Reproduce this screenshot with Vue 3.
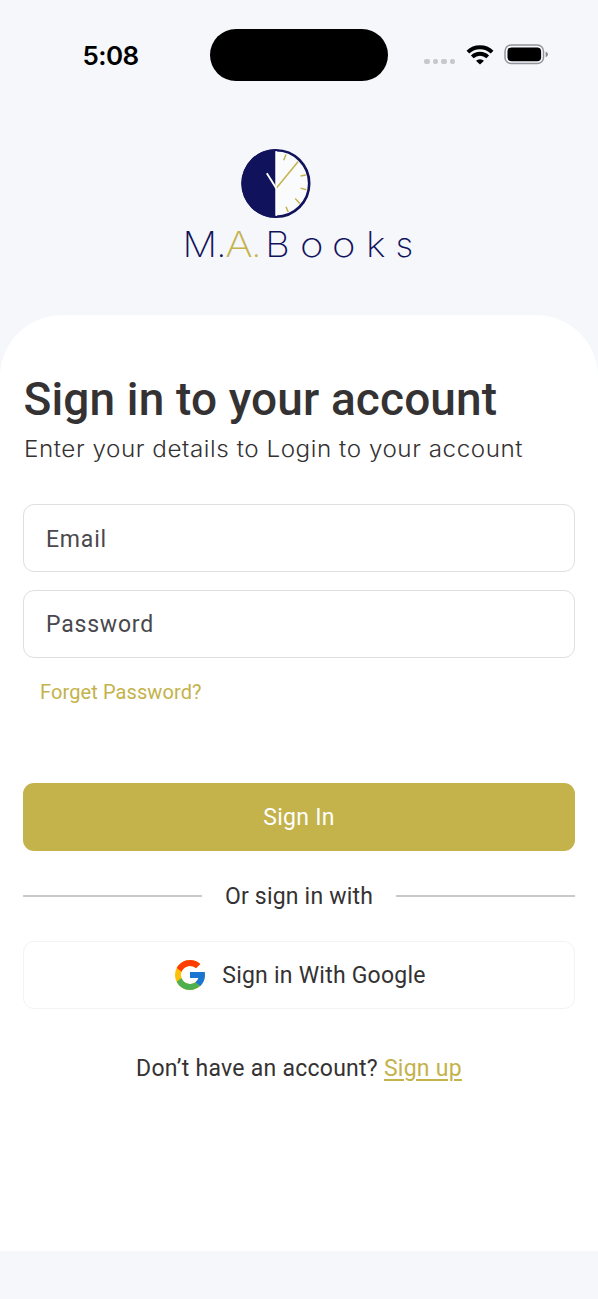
<script setup>
import { reactive } from 'vue'

const form = reactive({ email: '', password: '' })
</script>

<template>
  <main class="screen">
    <header class="status">
      <span class="time">5:08</span>
      <span class="island"></span>
      <div class="indicators">
        <span class="dots"><i v-for="n in 4" :key="n"></i></span>
        <svg class="wifi" width="28" height="20" viewBox="0 0 28 20">
          <g fill="none" stroke="#000" stroke-width="3.9">
            <path d="M1.9 7.1A17.4 17.4 0 0 1 26.1 7.1" />
            <path d="M6.3 11.9A11 11 0 0 1 21.7 11.9" />
          </g>
          <path d="M14 19.6L10 15.8A5.9 5.9 0 0 1 18 15.8Z" />
        </svg>
        <svg class="battery" width="45" height="21" viewBox="0 0 45 21">
          <rect x="1" y="1" width="38.5" height="18.6" rx="6.2" fill="none" stroke="#94959a" stroke-width="1.5" />
          <rect x="3.5" y="3.4" width="33.6" height="13.8" rx="4" />
          <path d="M41.7 7.4Q44 8.2 44 10.3T41.7 13.2Z" fill="#85868a" />
        </svg>
      </div>
    </header>

    <section class="brand">
      <svg width="240" height="120" viewBox="0 0 240 120" role="img" aria-label="M.A.Books">
        <circle cx="97" cy="34.5" r="33.2" fill="#fafbfd" stroke="#11125c" stroke-width="2.6" />
        <path d="M96.5 .2A34.3 34.3 0 0 0 96.5 68.8Z" fill="#11125c" />
        <path d="M97.2 2V67" stroke="#fff" stroke-width="1.3" />
        <path d="M97.5 39L119.2 12.5M107 5.5L104.7 11.3M121.5 26.9L126.8 26M121.5 39.1L127.4 40.8M116.2 49.5L120.8 54.5M107 57.7L109.2 63" fill="none" stroke="#c4b24b" stroke-width="1.5" />
        <path d="M87.8 24.3L97.4 39.5" stroke="#fff" stroke-width="1.9" />
        <g class="wordmark">
          <text x="3.5" y="107.8" textLength="34.6" lengthAdjust="spacingAndGlyphs">M</text>
          <text x="37.4" y="107.8">.</text>
          <text class="gold" x="46.2" y="107.8" textLength="27.4" lengthAdjust="spacingAndGlyphs">A</text>
          <text class="gold" x="72.4" y="107.8">.</text>
          <text x="86.2" y="107.8" textLength="24.500" lengthAdjust="spacingAndGlyphs">B</text>
          <text x="121" y="107.8" textLength="23.500" lengthAdjust="spacingAndGlyphs">o</text>
          <text x="153" y="107.8" textLength="23.500" lengthAdjust="spacingAndGlyphs">o</text>
          <text x="187" y="107.8" textLength="19.500" lengthAdjust="spacingAndGlyphs">k</text>
          <text x="216.500" y="107.8">s</text>
        </g>
      </svg>
    </section>

    <section class="sheet">
      <h1>Sign in to your account</h1>
      <p class="intro">Enter your details to Login to your account</p>
      <form @submit.prevent>
        <input v-model="form.email" type="email" placeholder="Email" aria-label="Email" />
        <input v-model="form.password" type="password" placeholder="Password" aria-label="Password" />
        <a class="forgot">Forget Password?</a>
        <button class="primary" type="submit">Sign In</button>
      </form>
      <div class="divider"><span>Or sign in with</span></div>
      <button class="google" type="button">
        <svg width="30" height="30" viewBox="4 4 40 40">
          <path fill="#ffc107" d="M43.6 20.1H42V20H24v8h11.3C33.7 32.7 29.2 36 24 36c-6.6 0-12-5.4-12-12s5.4-12 12-12c3.1 0 5.8 1.2 8 3l5.7-5.7C34 6.1 29.3 4 24 4 13 4 4 13 4 24s9 20 20 20 20-9 20-20c0-1.3-.1-2.6-.4-3.9z" />
          <path fill="#ff3d00" d="M6.3 14.7l6.6 4.8C14.7 15.1 19 12 24 12c3.1 0 5.8 1.2 8 3l5.7-5.7C34 6.1 29.3 4 24 4 16.3 4 9.7 8.3 6.3 14.7z" />
          <path fill="#4caf50" d="M24 44c5.2 0 9.9-2 13.4-5.2l-6.2-5.2A12 12 0 0 1 12.7 28l-6.5 5C9.5 39.6 16.2 44 24 44z" />
          <path fill="#1976d2" d="M43.6 20.1H42V20H24v8h11.3a12 12 0 0 1-4.1 5.6l6.2 5.2C37 39.2 44 34 44 24c0-1.3-.1-2.6-.4-3.9z" />
        </svg>
        <span>Sign in With Google</span>
      </button>
      <p class="signup">Don’t have an account? <a>Sign up</a></p>
    </section>
  </main>
</template>

<style>
body {
  margin: 0;
  background: #f5f7fb;
}
</style>

<style scoped>
.screen {
  box-sizing: border-box;
  width: 598px;
  height: 1299px;
  display: flex;
  flex-direction: column;
  background: #f5f7fb;
  color: #353233;
  font-family: Roboto, "Liberation Sans", sans-serif;
}

.status {
  height: 110px;
  display: grid;
  grid-template-columns: 210px 178px 210px;
  align-items: center;
}

.time {
  padding: 2px 0 0 11px;
  text-align: center;
  color: #000;
  font: 600 26px/30px Inter, sans-serif;
  letter-spacing: -0.6px;
}

.island {
  height: 52px;
  border-radius: 26px;
  background: #000;
}

.indicators {
  display: flex;
  align-items: center;
  padding-left: 36px;
}

.dots {
  display: flex;
  gap: 3px;
  padding-top: 13px;
}

.dots i {
  width: 5.5px;
  height: 5.5px;
  border-radius: 2px;
  background: #c7c8cc;
}

.wifi {
  margin: -1px 0 0 11px;
}

.battery {
  margin: -1px 0 0 10px;
}

.brand {
  height: 166px;
  padding-top: 39px;
  display: flex;
  justify-content: center;
}

.wordmark {
  font-family: Inter, sans-serif;
  font-size: 35px;
  font-weight: 250;
  fill: #11125c;
}

.wordmark .gold {
  fill: #c4b24b;
}

.sheet {
  box-sizing: border-box;
  height: 936px;
  padding: 56px 23px 0;
  border-radius: 62px 62px 0 0;
  background: #fff;
}

h1 {
  margin: 0 0 0 0.5px;
  font-size: 46px;
  font-weight: 500;
  line-height: 56px;
  letter-spacing: 0.13px;
  white-space: nowrap;
}

.intro {
  width: max-content;
  margin: 6px 0 0 0.5px;
  font: 300 22.5px/32px Inter, sans-serif;
  letter-spacing: 0.5px;
  white-space: nowrap;
  transform: scaleX(1.077);
  transform-origin: left;
}

form {
  display: flex;
  flex-direction: column;
  padding-top: 39px;
}

input {
  box-sizing: border-box;
  width: 100%;
  height: 68px;
  margin: 0 0 17.5px;
  padding: 2px 22px 0;
  border: 1.5px solid #dedfe0;
  border-radius: 11px;
  outline: 0;
  background: #fff;
  color: #49484d;
  font: 400 23px Roboto, sans-serif;
  letter-spacing: 0.8px;
}

input::placeholder {
  color: #49484d;
  opacity: 1;
}

.forgot {
  margin: 4px 0 0 17px;
  color: #c4b24b;
  font-size: 20px;
  line-height: 26px;
  letter-spacing: 0.1px;
}

button {
  box-sizing: border-box;
  width: 100%;
  height: 68px;
  padding: 0;
  border-radius: 11px;
  font: 400 23px Roboto, sans-serif;
  letter-spacing: 0.23px;
}

.primary {
  margin-top: 78px;
  border: 0;
  background: #c4b24b;
  color: #fff;
  letter-spacing: 0.3px;
}

.divider {
  height: 90px;
  display: flex;
  align-items: center;
  gap: 23px;
  font-size: 23px;
  letter-spacing: 0.2px;
}

.divider::before,
.divider::after {
  content: "";
  flex: 1;
  height: 1.5px;
  background: #c9c9ca;
}

.google {
  display: flex;
  align-items: center;
  justify-content: center;
  gap: 17px;
  padding-left: 3px;
  border: 1.5px solid #f3f3f4;
  background: #fff;
  color: #353233;
}

.signup {
  margin: 44px 0 0;
  text-align: center;
  font-size: 23px;
  line-height: 32px;
  letter-spacing: 0.26px;
}

.signup a {
  color: #c4b24b;
  text-decoration: underline;
  text-decoration-thickness: 1.5px;
  text-underline-offset: 3px;
}
</style>
